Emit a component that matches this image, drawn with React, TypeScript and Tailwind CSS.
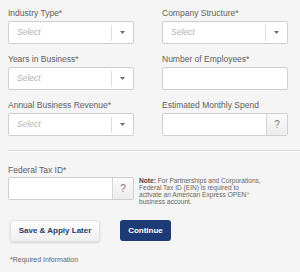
import React from 'react';

function SelectBox() {
  return (
    <div className="flex h-[23px] items-center rounded-[2px] border border-[#cfcfcf] bg-white">
      <span className="flex-1 pl-[8px] text-[8.5px] italic text-[#b4b4b4]">Select</span>
      <span className="h-[16px] w-px bg-[#dddddd]" />
      <span className="flex w-[21px] justify-center">
        <svg width="5" height="3" viewBox="0 0 5 3">
          <path d="M0 0h5L2.5 3z" fill="#6a6a6a" />
        </svg>
      </span>
    </div>
  );
}

function TextBox({ help }: { help?: boolean }) {
  return (
    <div className="flex h-[23px] rounded-[2px] border border-[#cfcfcf] bg-white">
      <div className="flex-1" />
      {help && (
        <div className="flex w-[21px] items-center justify-center rounded-r-[2px] border-l border-[#d4d4d4] bg-gradient-to-b from-[#fafafa] to-[#ececec] text-[10px] text-[#7a7a7a]">
          ?
        </div>
      )}
    </div>
  );
}

function Field({ label, children }: { label: string; children: React.ReactNode }) {
  return (
    <div>
      <div className="mb-[2px] h-[12px] text-[8.5px] leading-[12px] text-[#606060]">{label}</div>
      {children}
    </div>
  );
}

export default function App() {
  return (
    <div className="h-[272px] w-[300px] bg-[#f5f5f5] pt-[7px] font-['Liberation_Sans',Arial,sans-serif]">
      <div className="grid grid-cols-2 gap-x-[28px] gap-y-[9px] pl-[8px] pr-[12px]">
        <Field label="Industry Type*">
          <SelectBox />
        </Field>
        <Field label="Company Structure*">
          <SelectBox />
        </Field>
        <Field label="Years in Business*">
          <SelectBox />
        </Field>
        <Field label="Number of Employees*">
          <TextBox />
        </Field>
        <Field label="Annual Business Revenue*">
          <SelectBox />
        </Field>
        <Field label="Estimated Monthly Spend">
          <TextBox help />
        </Field>
      </div>

      <div className="ml-[8px] mt-[14px] border-t border-b border-t-[#dadada] border-b-white" />

      <div className="mt-[12px] px-[8px]">
        <div className="mb-[1px] h-[12px] text-[8.5px] leading-[12px] text-[#606060]">Federal Tax ID*</div>
        <div className="flex gap-[5px]">
          <div className="w-[126px] shrink-0">
            <div className="h-[24px]">
              <TextBox help />
            </div>
          </div>
          <p className="pt-[1px] text-[6.6px] leading-[6.9px] text-[#666666]">
            <b className="text-[#444444]">Note:</b> For Partnerships and Corporations,
            <br />
            Federal Tax ID (EIN) is required to
            <br />
            activate an American Express OPEN<sup className="text-[4px]">®</sup>
            <br />
            business account.
          </p>
        </div>

        <div className="mt-[14px] flex items-center gap-[20px] pl-[2px]">
          <button className="h-[22px] w-[90px] rounded-[3px] border border-[#e2e2e2] bg-gradient-to-b from-white to-[#efefef] text-[8px] font-bold text-[#263c6e] shadow-[0_1px_2px_rgba(0,0,0,0.15)]">
            Save &amp; Apply Later
          </button>
          <button className="h-[21px] w-[51px] rounded-[3px] bg-[#1d3b76] text-[8px] font-bold text-white">
            Continue
          </button>
        </div>

        <div className="mt-[13px] pl-[2px] text-[7px] text-[#666666]">*Required Information</div>
      </div>
    </div>
  );
}
